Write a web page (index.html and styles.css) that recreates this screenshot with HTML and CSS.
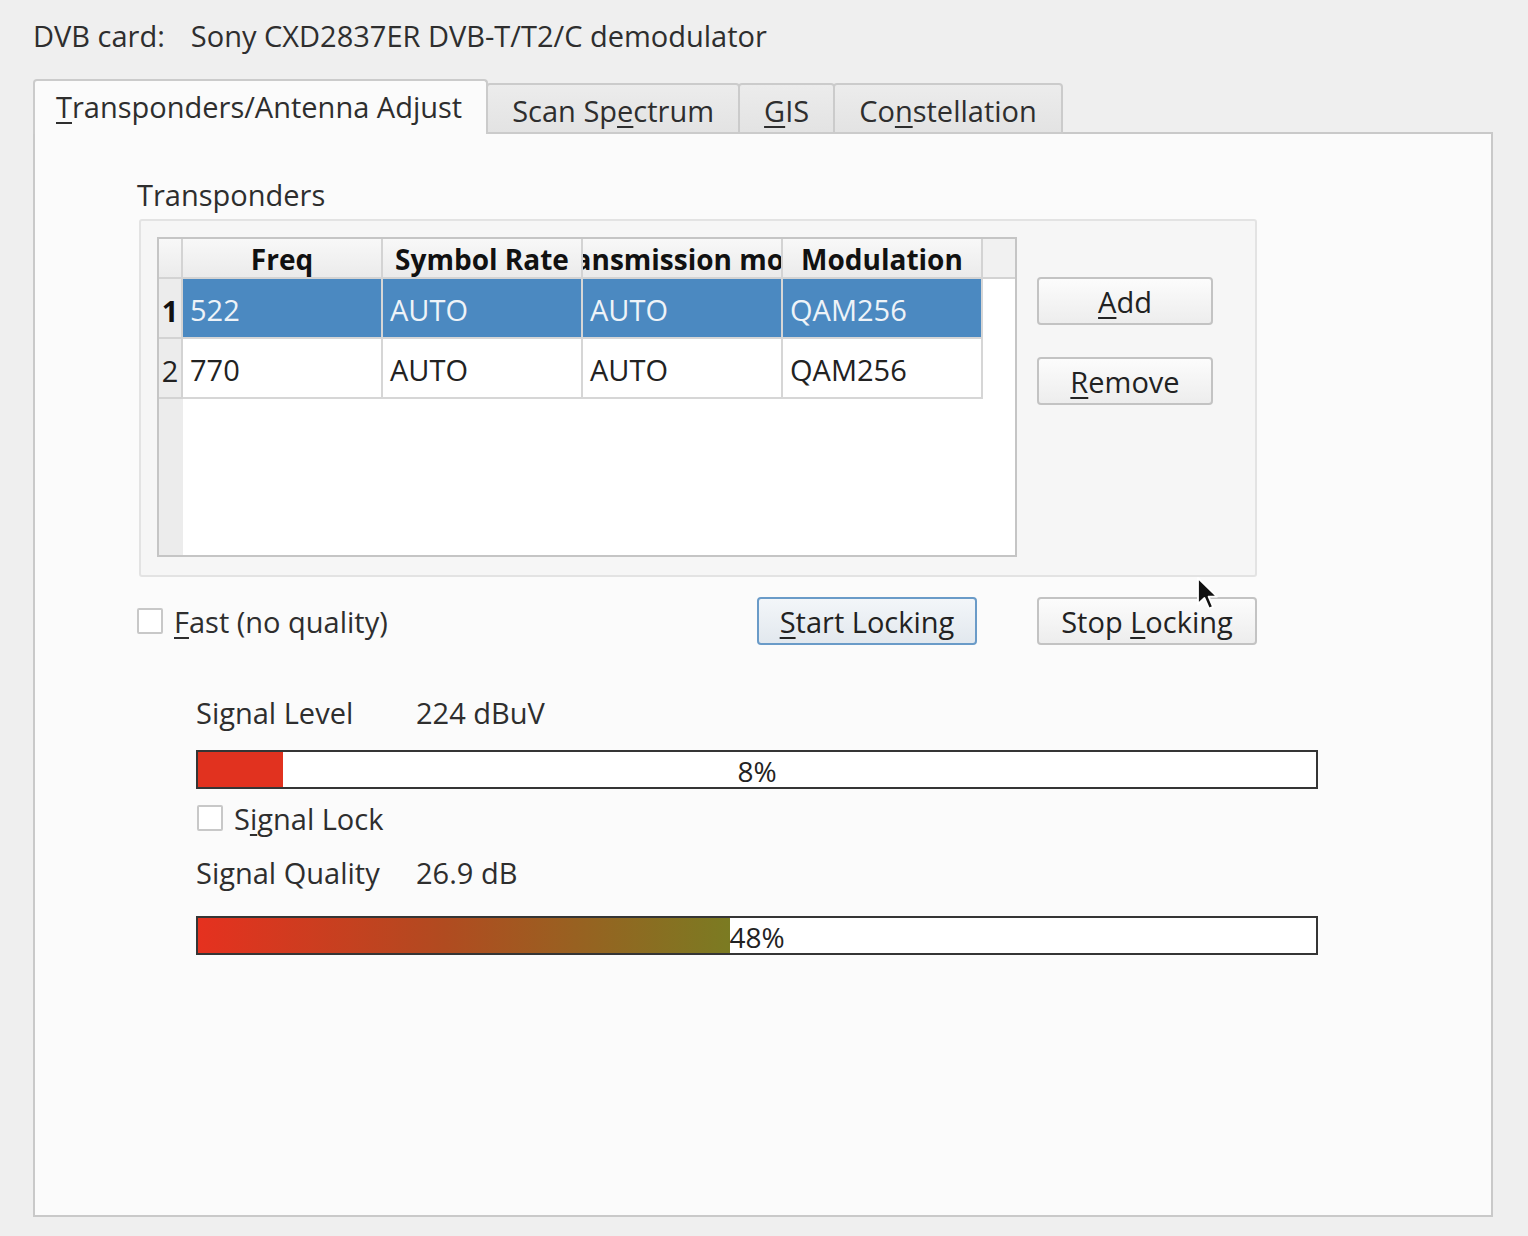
FILE: index.html
```html
<!DOCTYPE html>
<html>
<head>
<meta charset="utf-8">
<title>DVB</title>
<link rel="stylesheet" href="styles.css">
</head>
<body>
<div class="window">
  <div class="card-line">
    <span class="card-label">DVB card:</span>
    <span class="card-name">Sony CXD2837ER DVB-T/T2/C demodulator</span>
  </div>

  <div class="tabbar">
    <div class="tab active"><span><u>T</u>ransponders/Antenna Adjust</span></div>
    <div class="tab tab-scan"><span>Scan Sp<u>e</u>ctrum</span></div>
    <div class="tab tab-gis"><span><u>G</u>IS</span></div>
    <div class="tab tab-const"><span>Co<u>n</u>stellation</span></div>
  </div>

  <div class="pane">
    <div class="section">
      <div class="group-title">Transponders</div>
      <div class="group">
        <div class="table">
          <div class="thead">
            <div class="corner"></div>
            <div class="th"><span>Freq</span></div>
            <div class="th"><span>Symbol Rate</span></div>
            <div class="th"><span>Transmission mode</span></div>
            <div class="th"><span>Modulation</span></div>
            <div class="th-fill"></div>
          </div>
          <div class="row selected">
            <div class="rh">1</div>
            <div class="td">522</div>
            <div class="td">AUTO</div>
            <div class="td">AUTO</div>
            <div class="td">QAM256</div>
          </div>
          <div class="row">
            <div class="rh">2</div>
            <div class="td">770</div>
            <div class="td">AUTO</div>
            <div class="td">AUTO</div>
            <div class="td">QAM256</div>
          </div>
          <div class="table-rest"><div class="rh-rest"></div></div>
        </div>
        <div class="side-buttons">
          <button class="btn btn-side"><span><u>A</u>dd</span></button>
          <button class="btn btn-side"><span><u>R</u>emove</span></button>
        </div>
      </div>

      <div class="options">
        <div class="check"><span class="box"></span><span><u>F</u>ast (no quality)</span></div>
        <div class="lock-buttons">
          <button class="btn btn-lock btn-default"><span><u>S</u>tart Locking</span></button>
          <button class="btn btn-lock"><span>Stop <u>L</u>ocking</span></button>
        </div>
      </div>
    </div>

    <div class="signal">
      <div class="metric">
        <span class="metric-label">Signal Level</span>
        <span class="metric-value">224 dBuV</span>
      </div>
      <div class="bar bar-level">
        <div class="fill fill-level" style="width:7.6%"></div>
        <span class="bar-text">8%</span>
      </div>
      <div class="check check-lock"><span class="box"></span><span>S<u>i</u>gnal Lock</span></div>
      <div class="metric metric-quality">
        <span class="metric-label">Signal Quality</span>
        <span class="metric-value">26.9 dB</span>
      </div>
      <div class="bar bar-quality">
        <div class="fill fill-quality" style="width:47.6%"></div>
        <span class="bar-text">48%</span>
      </div>
    </div>
  </div>

  <svg class="cursor" width="26" height="36" viewBox="0 0 26 36">
    <path d="M2 2 L2 28 L8.5 22 L13 32.5 L17 30.8 L12.6 20.6 L21 20.6 Z" fill="#111" stroke="#fff" stroke-width="1.8" stroke-linejoin="round"/>
  </svg>
</div>
</body>
</html>
```

FILE: styles.css
```css
* {
  box-sizing: border-box;
}

body {
  margin: 0;
  background: #efefef;
  font-family: "Open Sans", "Noto Sans", sans-serif;
  font-size: 29px;
  color: #2e2e2e;
}

u {
  text-decoration-thickness: 2px;
  text-underline-offset: 4px;
}

.window {
  position: relative;
  width: 1528px;
  height: 1236px;
  padding: 16px 0 0 33px;
}

.card-line {
  display: flex;
  gap: 26px;
  height: 40px;
  line-height: 40px;
}

/* Tabs */
.tabbar {
  display: flex;
  align-items: flex-end;
  height: 55px;
  margin-top: 23px;
  position: relative;
  z-index: 2;
}

.tab {
  height: 51px;
  padding: 4px 24px 0 24px;
  display: flex;
  align-items: center;
  border: 2px solid #cbcbcb;
  border-radius: 4px 4px 0 0;
  background: linear-gradient(#ececec, #e3e3e3);
  white-space: nowrap;
  margin-left: -2px;
}

.tab.active {
  height: 55px;
  padding: 0 24px 2px 21px;
  margin-left: 0;
  border-bottom: none;
  background: #fbfbfb;
  z-index: 1;
}

/* Pane */
.pane {
  width: 1460px;
  height: 1085px;
  margin-top: -2px;
  border: 2px solid #c9c9c9;
  background: #fbfbfb;
  padding: 0 0 0 102px;
}

.section {
  width: 1120px;
}

.group-title {
  margin-top: 43px;
  height: 36px;
  line-height: 36px;
}

.group {
  display: flex;
  align-items: flex-start;
  gap: 20px;
  width: 1118px;
  height: 358px;
  margin-left: 2px;
  margin-top: 6px;
  padding: 16px;
  border: 2px solid #e3e3e3;
  border-radius: 3px;
  background: #f6f6f6;
}

/* Table */
.table {
  width: 860px;
  height: 320px;
  border: 2px solid #c5c5c5;
  background: #fff;
  display: flex;
  flex-direction: column;
}

.thead {
  display: flex;
  height: 40px;
  flex: none;
  background: linear-gradient(#f8f8f8, #ebebeb);
  border-bottom: 2px solid #d3d3d3;
}

.corner {
  width: 24px;
  flex: none;
  border-right: 2px solid #d3d3d3;
}

.th {
  width: 200px;
  flex: none;
  display: flex;
  justify-content: center;
  align-items: center;
  overflow: hidden;
  white-space: nowrap;
  border-right: 2px solid #d3d3d3;
  font-weight: 700;
  color: #111;
  font-size: 28px;
  padding-top: 2px;
}

.th span {
  flex: none;
}

.th-fill {
  flex: 1;
  background: #f1f1f1;
}

.row {
  display: flex;
  height: 60px;
  flex: none;
  width: 824px;
}

.rh {
  width: 24px;
  flex: none;
  display: flex;
  align-items: center;
  justify-content: center;
  background: #ececec;
  border-right: 2px solid #d3d3d3;
  border-bottom: 2px solid #d3d3d3;
  color: #222;
  padding-top: 4px;
}

.row.selected .rh {
  font-weight: 700;
  color: #111;
}

.td {
  width: 200px;
  flex: none;
  display: flex;
  align-items: center;
  padding: 2px 0 0 7px;
  border-right: 2px solid #d6d6d6;
  border-bottom: 2px solid #d6d6d6;
  color: #222;
}

.row.selected .td {
  background: #4b89c1;
  color: #eef3f8;
}

.table-rest {
  flex: 1;
  display: flex;
}

.rh-rest {
  width: 24px;
  background: #ececec;
}

.side-buttons {
  display: flex;
  flex-direction: column;
  gap: 32px;
  margin-top: 40px;
}

/* Buttons */
.btn {
  font: inherit;
  color: #222;
  height: 48px;
  border: 2px solid #c3c3c3;
  border-radius: 4px;
  background: linear-gradient(#fcfcfc, #ededed);
  padding: 0;
  display: flex;
  align-items: center;
  justify-content: center;
  white-space: nowrap;
}

.btn-side {
  width: 176px;
}

.btn-lock {
  width: 220px;
}

.btn-default {
  border-color: #6a9bc8;
  background: linear-gradient(#f3f6f9, #e2e8ee);
}

/* Options */
.options {
  display: flex;
  justify-content: space-between;
  align-items: center;
  height: 48px;
  margin-top: 20px;
}

.lock-buttons {
  display: flex;
  gap: 60px;
}

.check {
  display: flex;
  align-items: center;
  gap: 11px;
  height: 36px;
}

.box {
  width: 26px;
  height: 26px;
  border: 2px solid #c8c8c8;
  border-radius: 2px;
  background: #fff;
  flex: none;
}

/* Signal */
.signal {
  margin-left: 59px;
  width: 1122px;
}

.metric {
  display: grid;
  grid-template-columns: 220px auto;
  height: 36px;
  line-height: 36px;
  margin-top: 50px;
}

.metric-quality {
  margin-top: 19px;
}

.bar {
  position: relative;
  height: 39px;
  border: 2px solid #353535;
  background: #fff;
  display: flex;
  align-items: center;
  justify-content: center;
}

.bar-level {
  margin-top: 19px;
}

.bar-quality {
  margin-top: 25px;
}

.fill {
  position: absolute;
  left: 0;
  top: 0;
  bottom: 0;
}

.fill-level {
  background: #e1321f;
}

.fill-quality {
  background: linear-gradient(90deg, #e5311f, #b24a20 45%, #7b7b22);
}

.bar-text {
  position: relative;
  color: #222;
  padding-top: 2px;
  font-size: 28px;
}

.check-lock {
  margin-top: 11px;
  margin-left: 1px;
}

.cursor {
  position: absolute;
  left: 1196px;
  top: 576px;
}
```
